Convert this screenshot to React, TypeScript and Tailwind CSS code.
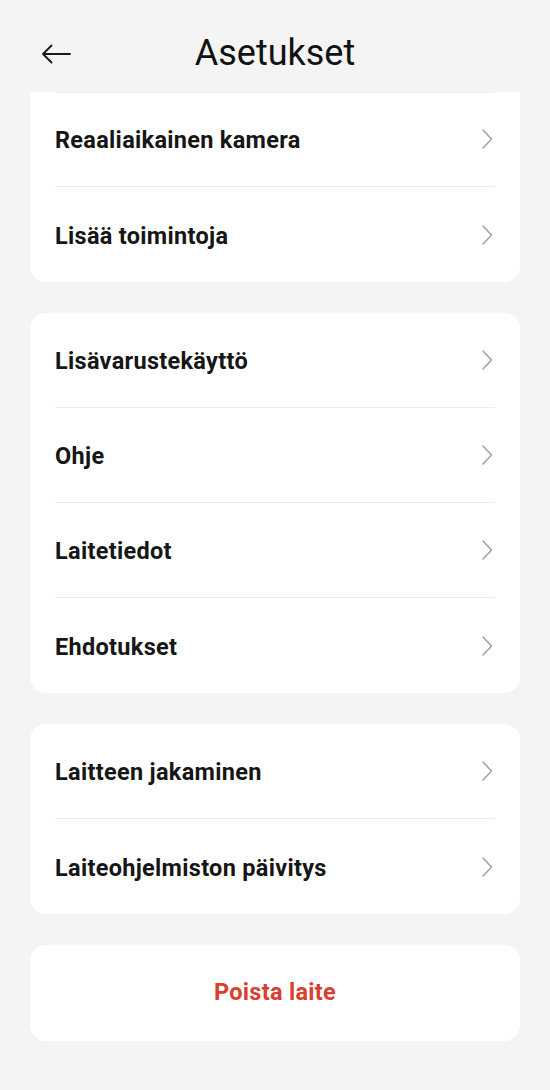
import { ReactNode } from 'react';

const font = { fontFamily: 'Roboto, "Noto Sans", sans-serif' };

function Chevron() {
  return (
    <svg width="14" height="22" viewBox="0 0 14 22" fill="none" className="shrink-0">
      <path d="M3 2 L11.5 11 L3 20" stroke="#a3a3a3" strokeWidth="1.6" strokeLinecap="round" strokeLinejoin="round" />
    </svg>
  );
}

function Row({ label, last }: { label: string; last?: boolean }) {
  return (
    <div className="px-[25px]">
      <div className={`flex h-[95px] items-center justify-between pr-[1px] ${last ? '' : 'border-b border-[#ececec]'}`}>
        <span className="pt-[4px] text-[23.5px] font-bold tracking-[0.3px] text-[#161616]">{label}</span>
        <Chevron />
      </div>
    </div>
  );
}

function Card({ children, className = '' }: { children: ReactNode; className?: string }) {
  return <div className={`overflow-hidden bg-white ${className}`}>{children}</div>;
}

export default function App() {
  return (
    <div className="flex h-[1090px] w-[550px] flex-col bg-[#f4f4f4]" style={font}>
      <header className="relative flex h-[92px] shrink-0 items-center justify-center pt-[14px]">
        <button className="absolute left-[41px] top-[44px]">
          <svg width="30" height="20" viewBox="0 0 30 20" fill="none">
            <path d="M29 10 H2 M10.5 1.5 L2 10 L10.5 18.5" stroke="#1a1a1a" strokeWidth="1.9" strokeLinecap="round" strokeLinejoin="round" />
          </svg>
        </button>
        <h1 className="text-[36px] font-normal leading-none text-[#111]">Asetukset</h1>
      </header>

      <div className="flex flex-col gap-[31px] px-[30px]">
        <Card className="rounded-b-[16px]">
          <div className="px-[25px]">
            <div className="border-t border-[#ececec]" />
          </div>
          <div className="-mt-[1px]">
            <Row label="Reaaliaikainen kamera" />
            <Row label="Lisää toimintoja" last />
          </div>
        </Card>

        <Card className="rounded-[16px]">
          <Row label="Lisävarustekäyttö" />
          <Row label="Ohje" />
          <Row label="Laitetiedot" />
          <Row label="Ehdotukset" last />
        </Card>

        <Card className="rounded-[16px]">
          <Row label="Laitteen jakaminen" />
          <Row label="Laiteohjelmiston päivitys" last />
        </Card>

        <Card className="rounded-[16px]">
          <button className="flex h-[96px] w-full items-center justify-center text-[23.5px] font-bold tracking-[0.3px] text-[#d9402f]">
            Poista laite
          </button>
        </Card>
      </div>
    </div>
  );
}
